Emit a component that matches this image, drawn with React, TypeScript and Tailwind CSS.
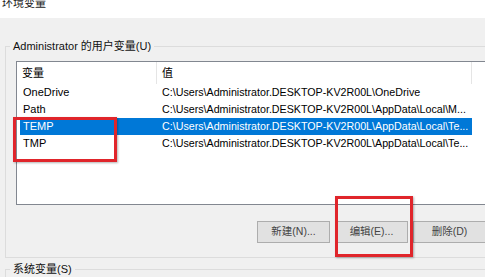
import React from 'react';

const rows = [
  { name: 'OneDrive', value: 'C:\\Users\\Administrator.DESKTOP-KV2R00L\\OneDrive' },
  { name: 'Path', value: 'C:\\Users\\Administrator.DESKTOP-KV2R00L\\AppData\\Local\\M...' },
  { name: 'TEMP', value: 'C:\\Users\\Administrator.DESKTOP-KV2R00L\\AppData\\Local\\Te...', selected: true },
  { name: 'TMP', value: 'C:\\Users\\Administrator.DESKTOP-KV2R00L\\AppData\\Local\\Te...' },
];

const font = { fontFamily: '"Liberation Sans", "Noto Sans CJK SC", sans-serif' };

export default function App() {
  return (
    <div
      className="relative w-[485px] h-[277px] overflow-hidden bg-[#f0f0f0] text-[11px] text-black"
      style={font}
    >
      {/* title bar */}
      <div className="h-[18px] bg-white overflow-hidden pl-[2px]">
        <div className="-mt-[5px] leading-[16px] text-[11px] text-[#222]">环境变量</div>
      </div>

      {/* user variables */}
      <fieldset className="ml-[5px] mt-[20px] w-[520px] border border-[#dcdcdc]">
        <legend className="ml-[4px] px-[3px] leading-[16px] text-[#111]">Administrator 的用户变量(U)</legend>

        <div className="pl-[10px] pb-[14px]">
          <div className="mt-[7px] w-[500px] h-[144px] border border-[#828790] bg-white">
            <div className="flex h-[22px] items-center">
              <div className="w-[140px] h-full flex items-center pl-[5px] border-r border-[#e5e5e5]">变量</div>
              <div className="w-[315px] h-full flex items-center pl-[5px] border-r border-[#e5e5e5]">值</div>
            </div>
            {rows.map((r) => (
              <div
                key={r.name}
                className={`flex h-[17px] items-center ml-[3px] w-[452px] ${r.selected ? 'bg-[#0078d7] text-white' : ''}`}
              >
                <div className="w-[137px] pl-[3px] whitespace-nowrap">{r.name}</div>
                <div className="flex-1 pl-[5px] whitespace-nowrap overflow-hidden text-[10.7px]">{r.value}</div>
              </div>
            ))}
          </div>

          <div className="flex gap-[5px] mt-[16px] ml-[241px]">
            {['新建(N)...', '编辑(E)...', '删除(D)'].map((b) => (
              <button
                key={b}
                className="w-[73px] h-[22px] border border-[#adadad] bg-[#e1e1e1] text-[10.5px] text-[#444]"
              >
                {b}
              </button>
            ))}
          </div>
        </div>
      </fieldset>

      {/* system variables */}
      <fieldset className="ml-[5px] mt-[3px] w-[520px] h-[40px] border border-[#dcdcdc]">
        <legend className="ml-[4px] px-[3px] leading-[16px] text-[#111]">系统变量(S)</legend>
      </fieldset>

      {/* annotation boxes */}
      <div className="absolute left-[13px] top-[117px] w-[104px] h-[45px] border-[3px] border-[#e0252b] shadow-[1px_1px_2px_rgba(0,0,0,0.3)]" />
      <div className="absolute left-[335px] top-[196px] w-[78px] h-[61px] border-[3px] border-[#e0252b] shadow-[1px_1px_2px_rgba(0,0,0,0.3)]" />
    </div>
  );
}
